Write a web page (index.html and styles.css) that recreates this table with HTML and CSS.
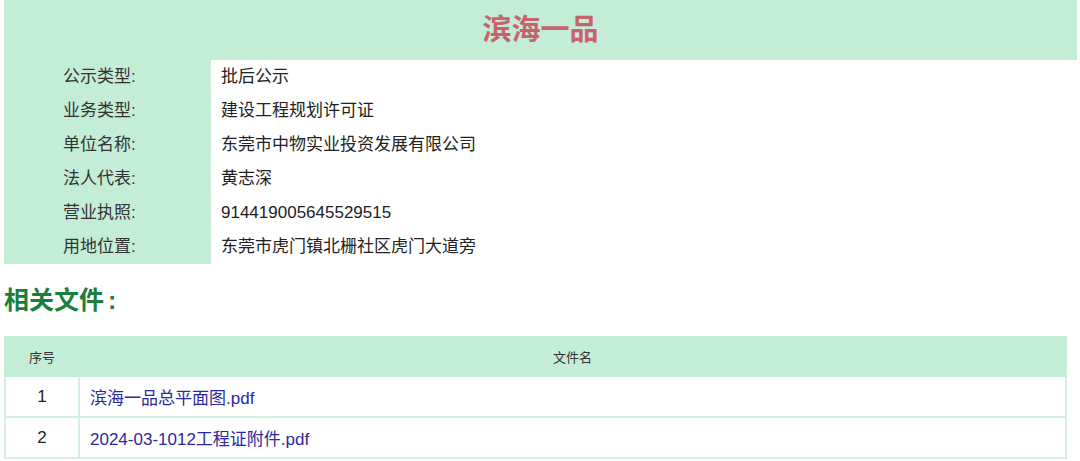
FILE: index.html
```html
<!DOCTYPE html>
<html lang="zh-CN">
<head>
<meta charset="utf-8">
<title>滨海一品</title>
<link rel="stylesheet" href="styles.css">
</head>
<body>
<div class="page">
  <div class="info">
    <div class="title">滨海一品</div>
    <div class="row"><div class="label">公示类型:</div><div class="value">批后公示</div></div>
    <div class="row"><div class="label">业务类型:</div><div class="value">建设工程规划许可证</div></div>
    <div class="row"><div class="label">单位名称:</div><div class="value">东莞市中物实业投资发展有限公司</div></div>
    <div class="row"><div class="label">法人代表:</div><div class="value">黄志深</div></div>
    <div class="row"><div class="label">营业执照:</div><div class="value">914419005645529515</div></div>
    <div class="row"><div class="label">用地位置:</div><div class="value">东莞市虎门镇北栅社区虎门大道旁</div></div>
  </div>
  <h2 class="section">相关文件<span class="colon">:</span></h2>
  <table class="files">
    <thead>
      <tr><th class="c-no">序号</th><th class="c-name">文件名</th></tr>
    </thead>
    <tbody>
      <tr><td class="c-no">1</td><td class="c-name"><a href="#">滨海一品总平面图.pdf</a></td></tr>
      <tr><td class="c-no">2</td><td class="c-name"><a href="#">2024-03-1012工程证附件.pdf</a></td></tr>
    </tbody>
  </table>
</div>
</body>
</html>
```
FILE: styles.css
```css
html, body {
  margin: 0;
  padding: 0;
  background: #ffffff;
}
body {
  font-family: "Liberation Sans", "Noto Sans CJK SC", sans-serif;
  color: #222;
}
.page {
  padding: 0 3px 0 4px;
}
.info {
  background: #c3edd6;
}
.title {
  height: 60px;
  line-height: 60px;
  text-align: center;
  font-size: 29px;
  font-weight: bold;
  color: #c9636b;
}
.row {
  display: flex;
  height: 34px;
}
.label {
  width: 207px;
  box-sizing: border-box;
  padding-left: 59px;
  font-size: 17px;
  line-height: 34px;
  color: #333;
}
.value {
  flex: 1;
  background: #ffffff;
  padding-left: 10px;
  font-size: 17px;
  line-height: 34px;
  color: #222;
}
.section {
  margin: 0;
  height: 72px;
  line-height: 72px;
  font-size: 25px;
  font-weight: bold;
  color: #1a7f3c;
}
.colon {
  margin-left: 4px;
}
.files {
  width: 1063px;
  border-collapse: collapse;
}
.files th {
  background: #c3edd6;
  height: 37px;
  padding: 0;
  border: 2px solid #c3edd6;
  font-size: 13px;
  font-weight: normal;
  color: #333;
  text-align: center;
}
.files td {
  height: 39px;
  padding: 0;
  font-size: 17px;
  border: 2px solid #d6efe3;
}
.files td.c-no {
  text-align: center;
  color: #222;
}
.c-no {
  width: 72px;
}
.files td.c-name {
  padding-left: 10px;
}
.files a {
  color: #2a2a9c;
  text-decoration: none;
}
```
